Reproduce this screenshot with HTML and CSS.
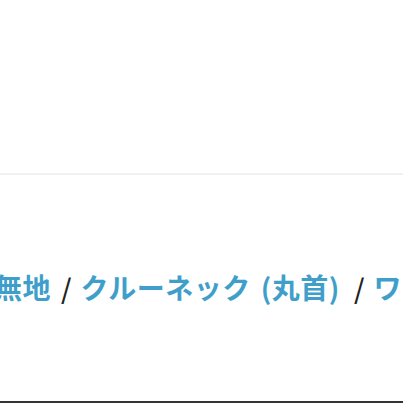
FILE: index.html
```html
<!DOCTYPE html>
<html lang="ja">
<head>
<meta charset="utf-8">
<link rel="stylesheet" href="styles.css">
</head>
<body>
<div class="page">
  <header class="top"></header>
  <nav class="crumbs">
    <a class="link">無地</a><span class="sep">/</span><a class="link">クルーネック<span class="paren">(丸首)</span></a><span class="sep sep-last">/</span><a class="link">ワイド</a>
  </nav>
  <footer class="bottom"></footer>
</div>
</body>
</html>
```
FILE: styles.css
```css
html, body {
  margin: 0;
  padding: 0;
  background: #fff;
}
.page {
  width: 403px;
  height: 403px;
  overflow: hidden;
  display: flex;
  flex-direction: column;
}
.top {
  height: 173px;
  flex: none;
  border-bottom: 2px solid #f1f1f1;
}
.crumbs {
  flex: 1;
  padding-top: 92px;
  margin-left: -6px;
  white-space: nowrap;
  font-family: "Noto Sans CJK JP", "Noto Sans", sans-serif;
  font-weight: 700;
  font-size: 28px;
  line-height: 40px;
  letter-spacing: 0.5px;
}
.link {
  color: #3f9fca;
}
.paren {
  margin-left: 10px;
}
.sep {
  display: inline-block;
  margin: 0 9px 0 10px;
  color: #222;
  font-size: 27px;
  font-weight: 500;
  letter-spacing: 0;
}
.sep-last {
  margin-left: 14px;
}
.bottom {
  height: 2px;
  flex: none;
  background: #333;
}
```
